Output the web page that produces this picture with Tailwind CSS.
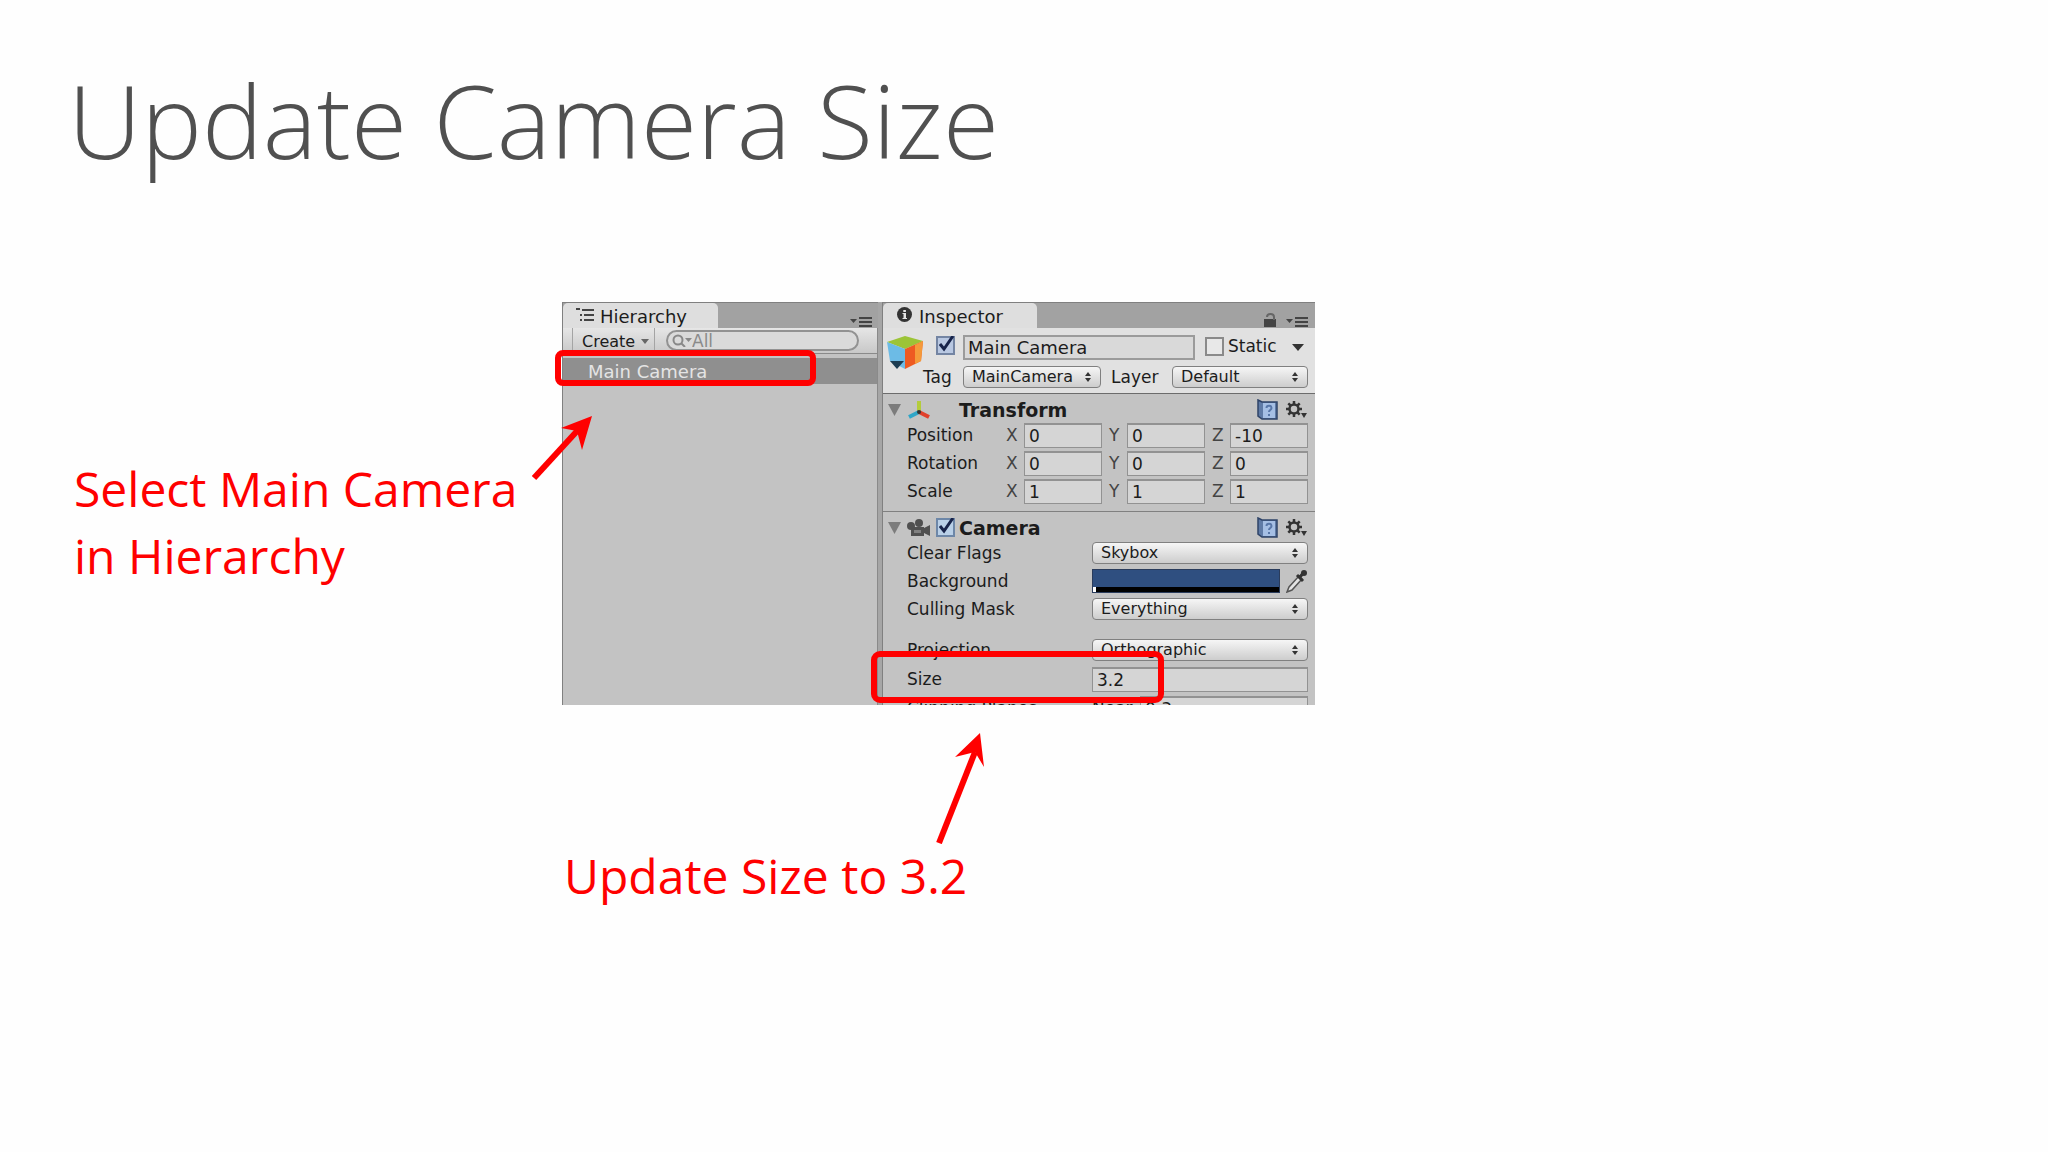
<!DOCTYPE html>
<html lang="en">
<head>
<meta charset="utf-8">
<title>Update Camera Size</title>
<script src="https://cdn.jsdelivr.net/npm/@tailwindcss/browser@4"></script>
</head>
<body class="min-h-screen bg-[#fefefe] font-['Open_Sans','Noto_Sans',sans-serif]">
<main class="pt-[50px]">
  <h1 class="pl-[68px] text-[102px] leading-[140px] font-light whitespace-nowrap text-[#505050]">Update Camera Size</h1>

  <div class="mt-[112px] flex items-start">
    <p class="w-[562px] shrink-0 pt-[153px] pl-[74px] text-[48px] leading-[67px] text-[#ff0000]">Select Main Camera<br>in Hierarchy</p>

    <div class="relative w-[753px] shrink-0">
      <section class="flex h-[403px] overflow-hidden bg-[#a2a2a2] font-['DejaVu_Sans',sans-serif] text-[17px] leading-[24px] text-[#1c1c1c]">

        <!-- Hierarchy panel -->
        <div class="flex w-[316px] shrink-0 flex-col border-t border-l border-[#808080]">
          <div class="flex h-[25px] items-end justify-between">
            <h2 class="flex h-[25px] w-[155px] items-center gap-[6px] rounded-t-[5px] bg-[#dedede] pt-[2px] pl-[13px] text-[18px]">
              <svg class="-mt-[4px] h-[14px] w-[18px]" viewBox="0 0 18 14" fill="none" stroke="#444" stroke-width="2"><path d="M0 1h4M6 2h12M4 7h2M8 7h10M4 12h2M8 12h10"/></svg>
              Hierarchy
            </h2>
            <button class="mr-[6px] mb-px" aria-label="Hierarchy panel menu"><svg class="h-[12px] w-[22px]" viewBox="0 0 22 12"><path d="M0 4h7l-3.500 4z" fill="#444"/><path d="M9 3h13M9 7h13M9 11h13" stroke="#444" stroke-width="2"/></svg></button>
          </div>
          <div class="flex h-[26px] items-start border-r border-b border-[#8a8a8a] bg-linear-to-b from-[#e6e6e6] to-[#c8c8c8]">
            <button class="ml-[9px] flex h-[25px] w-[83px] shrink-0 items-center gap-[6px] border-x border-[#a4a4a4] pl-[9px] pt-[3px] text-[16px] leading-[22px]">Create
              <svg class="-mt-[2px] h-[5px] w-[8px]" viewBox="0 0 8 5"><path d="M0 0h8L4 5z" fill="#666"/></svg>
            </button>
            <label class="mt-[2px] ml-[11px] flex h-[21px] w-[193px] shrink-0 items-center rounded-full border-2 border-[#929292] bg-[#dadada] pl-[4px]">
              <svg class="h-[13px] w-[20px] shrink-0" viewBox="0 0 20 13" fill="none" stroke="#888" stroke-width="2"><circle cx="6" cy="6" r="4.500"/><path d="M9 9l4 4"/><path d="M13 4h7l-3.500 4z" fill="#888" stroke="none"/></svg>
              <span class="sr-only">Search</span>
              <input class="h-[22px] w-full min-w-0 bg-transparent text-[17px] outline-none placeholder:text-[#8a8a8a]" placeholder="All">
            </label>
          </div>
          <div class="grow border-r border-[#8a8a8a] bg-[#c3c3c3] pt-[4px]">
            <a href="#" class="block h-[26px] bg-[#8f8f8f] pl-[25px] text-[18px] leading-[28px] text-[#e4e4e4]">Main Camera</a>
          </div>
        </div>

        <div class="w-[5px] shrink-0 border-r border-[#808080] bg-[#a6a6a6]"></div>

        <!-- Inspector panel -->
        <div class="flex min-w-0 grow flex-col border-t border-[#808080]">
          <div class="flex h-[25px] shrink-0 items-end justify-between">
            <h2 class="flex h-[25px] w-[154px] items-center gap-[7px] rounded-t-[5px] bg-[#dedede] pt-[2px] pl-[14px] text-[18px]">
              <svg class="-mt-[4px] h-[15px] w-[15px]" viewBox="0 0 15 15"><circle cx="7.500" cy="7.500" r="7.500" fill="#333"/><path d="M5.500 6h3.500v5h1v1H5.500v-1h1V7h-1zM6.300 3h2.600v2H6.300z" fill="#e4e4e4"/></svg>
              Inspector
            </h2>
            <div class="mr-[7px] mb-px flex items-end gap-[10px]">
              <button aria-label="Lock inspector"><svg class="h-[14px] w-[12px]" viewBox="0 0 12 14"><path d="M0 6h12v8H0z" fill="#444"/><path d="M3 4c0-4 7-4 7 0v3" fill="none" stroke="#666" stroke-width="2"/></svg></button>
              <button aria-label="Inspector panel menu"><svg class="h-[12px] w-[22px]" viewBox="0 0 22 12"><path d="M0 4h7l-3.500 4z" fill="#444"/><path d="M9 3h13M9 7h13M9 11h13" stroke="#444" stroke-width="2"/></svg></button>
            </div>
          </div>

          <div class="relative h-[66px] shrink-0 border-b border-[#6c6c6c] bg-[#e1e1e1] pt-[7px] pr-[7px]">
            <svg class="absolute top-[8px] left-[4px] h-[34px] w-[36px]" viewBox="0 0 36 34"><path d="M0 6L18 0l18 5-18 8z" fill="#9cc437"/><path d="M0 6l18 7v20L3 25z" fill="#6cbbe6"/><path d="M18 13l18-8-2 20-16 8z" fill="#ee5a22"/><path d="M28 9l8-4-2 20-6 3z" fill="#f59a3a"/><path d="M3 25h14l-7 8z" fill="#1d3d52"/></svg>
            <div class="flex h-[25px] items-start pl-[53px]">
              <span class="relative mt-px h-[19px] w-[19px] shrink-0">
                <input type="checkbox" checked aria-label="Active" class="block h-[19px] w-[19px] appearance-none border-2 border-[#7485a3] bg-[#b9c8e2]">
                <svg class="pointer-events-none absolute top-0 left-[3px] h-[16px] w-[16px]" viewBox="0 0 16 16" fill="none" stroke="#17234a" stroke-width="3"><path d="M1 8l4 5L14 0"/></svg>
              </span>
              <input aria-label="Object name" value="Main Camera" class="ml-[8px] h-[25px] w-[232px] shrink-0 border-2 border-[#9b9b9b] bg-[#d9d9d9] pl-[3px] text-[18px] outline-none">
              <label class="ml-[10px] flex h-[22px] items-center gap-[4px]"><input type="checkbox" class="h-[19px] w-[19px] appearance-none border-2 border-[#8a8a8a] bg-[#e8e8e8]">Static</label>
              <button aria-label="Static options" class="mt-[9px] mr-[4px] ml-auto"><svg class="h-[7px] w-[12px]" viewBox="0 0 12 7"><path d="M0 0h12L6 7z" fill="#333"/></svg></button>
            </div>
            <div class="mt-[6px] flex h-[22px] items-center">
              <label for="tag" class="w-[80px] shrink-0 pl-[40px]">Tag</label>
              <div class="relative w-[138px] shrink-0">
                <select id="tag" class="block h-[22px] w-full appearance-none rounded-[4px] border border-[#808080] bg-linear-to-b from-[#f6f6f6] to-[#cdcdcd] pl-[8px] text-[16px] leading-[20px]"><option>MainCamera</option></select>
                <svg class="pointer-events-none absolute top-[6px] right-[10px] h-[10px] w-[6px]" viewBox="0 0 6 10" fill="#333"><path d="M0 4h6L3 0zM0 6h6l-3 4z"/></svg>
              </div>
              <label for="layer" class="w-[71px] shrink-0 pl-[10px]">Layer</label>
              <div class="relative grow">
                <select id="layer" class="block h-[22px] w-full appearance-none rounded-[4px] border border-[#808080] bg-linear-to-b from-[#f6f6f6] to-[#cdcdcd] pl-[8px] text-[16px] leading-[20px]"><option>Default</option></select>
                <svg class="pointer-events-none absolute top-[6px] right-[10px] h-[10px] w-[6px]" viewBox="0 0 6 10" fill="#333"><path d="M0 4h6L3 0zM0 6h6l-3 4z"/></svg>
              </div>
            </div>
          </div>

          <!-- Transform component -->
          <div class="h-[118px] shrink-0 border-b border-[#808080] bg-[#c3c3c3] pr-[7px]">
            <div class="flex h-[27px] items-center pt-[4px] pl-[5px]">
              <svg class="h-[12px] w-[13px]" viewBox="0 0 13 12"><path d="M0 0h13L6.500 12z" fill="#7c7c7c"/></svg>
              <svg class="ml-[6px] h-[20px] w-[24px]" viewBox="0 0 24 20" fill="none" stroke-width="4"><path d="M12 12V1" stroke="#b4cc3c"/><path d="M12 12L2 17" stroke="#2fa6c8"/><path d="M12 12l10 5" stroke="#e0402c"/><circle cx="12" cy="12" r="2" fill="#333"/></svg>
              <h3 class="ml-[28px] text-[19px] font-bold">Transform</h3>
              <button aria-label="Transform help" class="ml-auto"><svg class="h-[22px] w-[21px]" viewBox="0 0 21 22"><path d="M1 1l4 2h15v17H5l-4-3z" fill="#5f7ba6" stroke="#2f4468" stroke-width="1.500"/><path d="M6 4h12v15H6z" fill="#a5bfe4"/><path d="M9.500 9c0-3 5-3 5 0 0 2-2.500 2-2.500 4M12 15v2" fill="none" stroke="#5877a8" stroke-width="2"/></svg></button>
              <button aria-label="Transform settings" class="mr-[1px] ml-[8px]"><svg class="h-[18px] w-[21px]" viewBox="0 0 21 18"><circle cx="8" cy="8" r="4.500" fill="none" stroke="#333" stroke-width="2.500"/><path d="M8 0v3M8 13v3M0 8h3M13 8h3M2.300 2.300l2.200 2.200M11.500 11.500l2.200 2.200M2.300 13.700l2.200-2.200M11.500 4.500l2.200-2.200" stroke="#333" stroke-width="2.500"/><path d="M15 12h6l-3 5z" fill="#333"/></svg></button>
            </div>
            <div class="flex h-[28px] items-center pl-[24px]">
              <span class="w-[99px] shrink-0">Position</span>
              <div class="grid grow grid-cols-3 gap-[7px]">
                <label class="flex items-center"><span class="w-[18px] shrink-0 text-[#444]">X</span><input value="0" class="h-[25px] w-full min-w-0 border border-t-2 border-[#929292] bg-[#d5d5d5] pl-[4px] outline-none"></label>
                <label class="flex items-center"><span class="w-[18px] shrink-0 text-[#444]">Y</span><input value="0" class="h-[25px] w-full min-w-0 border border-t-2 border-[#929292] bg-[#d5d5d5] pl-[4px] outline-none"></label>
                <label class="flex items-center"><span class="w-[18px] shrink-0 text-[#444]">Z</span><input value="-10" class="h-[25px] w-full min-w-0 border border-t-2 border-[#929292] bg-[#d5d5d5] pl-[4px] outline-none"></label>
              </div>
            </div>
            <div class="flex h-[28px] items-center pl-[24px]">
              <span class="w-[99px] shrink-0">Rotation</span>
              <div class="grid grow grid-cols-3 gap-[7px]">
                <label class="flex items-center"><span class="w-[18px] shrink-0 text-[#444]">X</span><input value="0" class="h-[25px] w-full min-w-0 border border-t-2 border-[#929292] bg-[#d5d5d5] pl-[4px] outline-none"></label>
                <label class="flex items-center"><span class="w-[18px] shrink-0 text-[#444]">Y</span><input value="0" class="h-[25px] w-full min-w-0 border border-t-2 border-[#929292] bg-[#d5d5d5] pl-[4px] outline-none"></label>
                <label class="flex items-center"><span class="w-[18px] shrink-0 text-[#444]">Z</span><input value="0" class="h-[25px] w-full min-w-0 border border-t-2 border-[#929292] bg-[#d5d5d5] pl-[4px] outline-none"></label>
              </div>
            </div>
            <div class="flex h-[28px] items-center pl-[24px]">
              <span class="w-[99px] shrink-0">Scale</span>
              <div class="grid grow grid-cols-3 gap-[7px]">
                <label class="flex items-center"><span class="w-[18px] shrink-0 text-[#444]">X</span><input value="1" class="h-[25px] w-full min-w-0 border border-t-2 border-[#929292] bg-[#d5d5d5] pl-[4px] outline-none"></label>
                <label class="flex items-center"><span class="w-[18px] shrink-0 text-[#444]">Y</span><input value="1" class="h-[25px] w-full min-w-0 border border-t-2 border-[#929292] bg-[#d5d5d5] pl-[4px] outline-none"></label>
                <label class="flex items-center"><span class="w-[18px] shrink-0 text-[#444]">Z</span><input value="1" class="h-[25px] w-full min-w-0 border border-t-2 border-[#929292] bg-[#d5d5d5] pl-[4px] outline-none"></label>
              </div>
            </div>
          </div>

          <!-- Camera component -->
          <div class="shrink-0 bg-[#c3c3c3] pr-[7px]">
            <div class="flex h-[27px] items-center pt-[4px] pl-[5px]">
              <svg class="h-[12px] w-[13px]" viewBox="0 0 13 12"><path d="M0 0h13L6.500 12z" fill="#7c7c7c"/></svg>
              <svg class="ml-[6px] h-[18px] w-[24px]" viewBox="0 0 24 18" fill="#505050"><circle cx="4" cy="7" r="4"/><circle cx="12" cy="4" r="4"/><path d="M4 8h13v9H4zM17 9l6-3v11l-6-3z"/><path d="M7 11h7v3H7z" fill="#808080"/></svg>
              <span class="relative ml-[5px] h-[19px] w-[19px] shrink-0">
                <input type="checkbox" checked aria-label="Camera enabled" class="block h-[19px] w-[19px] appearance-none border-2 border-[#6d87a8] bg-[#b9d0e8]">
                <svg class="pointer-events-none absolute top-0 left-[3px] h-[16px] w-[16px]" viewBox="0 0 16 16" fill="none" stroke="#17234a" stroke-width="3"><path d="M1 8l4 5L14 0"/></svg>
              </span>
              <h3 class="ml-[4px] text-[19px] font-bold">Camera</h3>
              <button aria-label="Camera help" class="ml-auto"><svg class="h-[22px] w-[21px]" viewBox="0 0 21 22"><path d="M1 1l4 2h15v17H5l-4-3z" fill="#5f7ba6" stroke="#2f4468" stroke-width="1.500"/><path d="M6 4h12v15H6z" fill="#a5bfe4"/><path d="M9.500 9c0-3 5-3 5 0 0 2-2.500 2-2.500 4M12 15v2" fill="none" stroke="#5877a8" stroke-width="2"/></svg></button>
              <button aria-label="Camera settings" class="mr-[1px] ml-[8px]"><svg class="h-[18px] w-[21px]" viewBox="0 0 21 18"><circle cx="8" cy="8" r="4.500" fill="none" stroke="#333" stroke-width="2.500"/><path d="M8 0v3M8 13v3M0 8h3M13 8h3M2.300 2.300l2.200 2.200M11.500 11.500l2.200 2.200M2.300 13.700l2.200-2.200M11.500 4.500l2.200-2.200" stroke="#333" stroke-width="2.500"/><path d="M15 12h6l-3 5z" fill="#333"/></svg></button>
            </div>
            <div class="flex h-[28px] items-center pl-[24px]">
              <label for="flags" class="w-[185px] shrink-0">Clear Flags</label>
              <div class="relative grow">
                <select id="flags" class="block h-[22px] w-full appearance-none rounded-[4px] border border-[#808080] bg-linear-to-b from-[#f6f6f6] to-[#cdcdcd] pl-[8px] text-[16px] leading-[20px]"><option>Skybox</option></select>
                <svg class="pointer-events-none absolute top-[6px] right-[10px] h-[10px] w-[6px]" viewBox="0 0 6 10" fill="#333"><path d="M0 4h6L3 0zM0 6h6l-3 4z"/></svg>
              </div>
            </div>
            <div class="flex h-[28px] items-center pl-[24px]">
              <span class="w-[185px] shrink-0">Background</span>
              <button aria-label="Background colour" class="h-[24px] w-[188px] shrink-0 border border-[#2a3c5c] bg-[#2f4f80]"><span class="flex h-full flex-col justify-end"><span class="block h-[5px] border-l-[3px] border-white bg-black"></span></span></button>
              <button aria-label="Pick colour" class="ml-[6px]"><svg class="h-[23px] w-[21px]" viewBox="0 0 21 23"><path d="M1 22l2-5L13 6l3 3L6 20z" fill="#e4e4e4" stroke="#555" stroke-width="1.500"/><path d="M11 5l6 6M14 7l4-5" stroke="#333" stroke-width="3"/><circle cx="18" cy="3" r="3" fill="#333"/></svg></button>
            </div>
            <div class="flex h-[28px] items-center pl-[24px]">
              <label for="mask" class="w-[185px] shrink-0">Culling Mask</label>
              <div class="relative grow">
                <select id="mask" class="block h-[22px] w-full appearance-none rounded-[4px] border border-[#808080] bg-linear-to-b from-[#f6f6f6] to-[#cdcdcd] pl-[8px] text-[16px] leading-[20px]"><option>Everything</option></select>
                <svg class="pointer-events-none absolute top-[6px] right-[10px] h-[10px] w-[6px]" viewBox="0 0 6 10" fill="#333"><path d="M0 4h6L3 0zM0 6h6l-3 4z"/></svg>
              </div>
            </div>
            <div class="mt-[13px] flex h-[28px] items-center pl-[24px]">
              <label for="projection" class="w-[185px] shrink-0">Projection</label>
              <div class="relative grow">
                <select id="projection" class="block h-[22px] w-full appearance-none rounded-[4px] border border-[#808080] bg-linear-to-b from-[#f6f6f6] to-[#cdcdcd] pl-[8px] text-[16px] leading-[20px]"><option>Orthographic</option></select>
                <svg class="pointer-events-none absolute top-[6px] right-[10px] h-[10px] w-[6px]" viewBox="0 0 6 10" fill="#333"><path d="M0 4h6L3 0zM0 6h6l-3 4z"/></svg>
              </div>
            </div>
            <div class="flex h-[30px] items-center pl-[24px]">
              <label for="size" class="w-[185px] shrink-0">Size</label>
              <input id="size" value="3.2" class="h-[25px] min-w-0 grow border border-t-2 border-[#929292] bg-[#d5d5d5] pl-[4px] outline-none">
            </div>
            <div class="flex h-[28px] items-center pl-[24px]">
              <span class="w-[185px] shrink-0">Clipping Planes</span>
              <label class="flex grow items-center"><span class="w-[48px] shrink-0">Near</span><input value="0.3" class="h-[25px] w-full min-w-0 border border-t-2 border-[#929292] bg-[#d5d5d5] pl-[4px] outline-none"></label>
            </div>
          </div>
        </div>
      </section>

      <!-- Callouts drawn over the editor -->
      <div class="pointer-events-none absolute top-[48px] -left-[7px] h-[36px] w-[261px] rounded-[8px] border-[6px] border-[#ff0000]"></div>
      <div class="pointer-events-none absolute top-[349px] left-[309px] h-[52px] w-[293px] rounded-[9px] border-[6px] border-[#ff0000]"></div>
      <svg class="pointer-events-none absolute top-[112px] -left-[32px] h-[68px] w-[66px]" viewBox="0 0 66 68"><path d="M4 64L48 16" stroke="#f00" stroke-width="6"/><path d="M62 2L52 36 47 17 31 14z" fill="#f00"/></svg>
      <svg class="pointer-events-none absolute top-[430px] left-[370px] h-[112px] w-[56px]" viewBox="0 0 56 112"><path d="M7 111L43 20" stroke="#f00" stroke-width="6"/><path d="M48 1L52 35 43 20 23 25z" fill="#f00"/></svg>

      <p class="mt-[137px] pl-[2px] text-[48px] leading-[67px] whitespace-nowrap text-[#ff0000]">Update Size to 3.2</p>
    </div>
  </div>
</main>
</body>
</html>
